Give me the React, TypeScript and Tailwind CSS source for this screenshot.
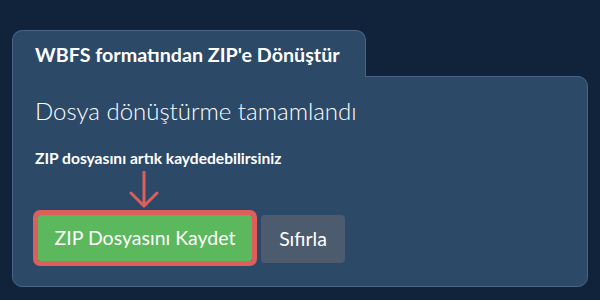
export default function App() {
  return (
    <div className="w-full h-[300px] bg-[#11233a] pt-[30px] px-[12px] font-['Lato','Liberation_Sans',sans-serif] text-white">
      <div className="relative z-10 -mb-px inline-block rounded-t-[10px] border border-b-0 border-[#4a6485] bg-[#2c4968] pl-[22px] pr-[25px] pt-[12px] pb-[10px]">
        <h1 className="text-[19.7px] leading-[24px] font-bold">WBFS formatından ZIP'e Dönüştür</h1>
      </div>
      <div className="h-[211px] rounded-b-[10px] rounded-tr-[10px] border border-[#4a6485] bg-[#2c4968] px-[22px] pt-[20px]">
        <h2 className="text-[24px] leading-[28px] font-light">Dosya dönüştürme tamamlandı</h2>
        <p className="mt-[23px] text-[15.6px] leading-[20px] font-bold">ZIP dosyasını artık kaydedebilirsiniz</p>
        <div className="relative pt-[47px] flex gap-[9px] pl-[3px]">
          <svg className="absolute left-[93px] top-[3px]" width="32" height="38" viewBox="0 0 32 38" fill="none">
            <path d="M16 1 V35 M3 22 L16 35 L29 22" stroke="#dc5f5b" strokeWidth="3" strokeLinecap="round" strokeLinejoin="round" />
          </svg>
          <button className="h-[46px] w-[214px] rounded-[2px] bg-[#5cb85c] text-[19.5px] outline-[5px] outline-solid outline-[#dc5f5b]">
            ZIP Dosyasını Kaydet
          </button>
          <button className="h-[48px] w-[84px] rounded-[4px] bg-[#4c5c6e] text-[19.5px]">Sıfırla</button>
        </div>
      </div>
    </div>
  )
}
